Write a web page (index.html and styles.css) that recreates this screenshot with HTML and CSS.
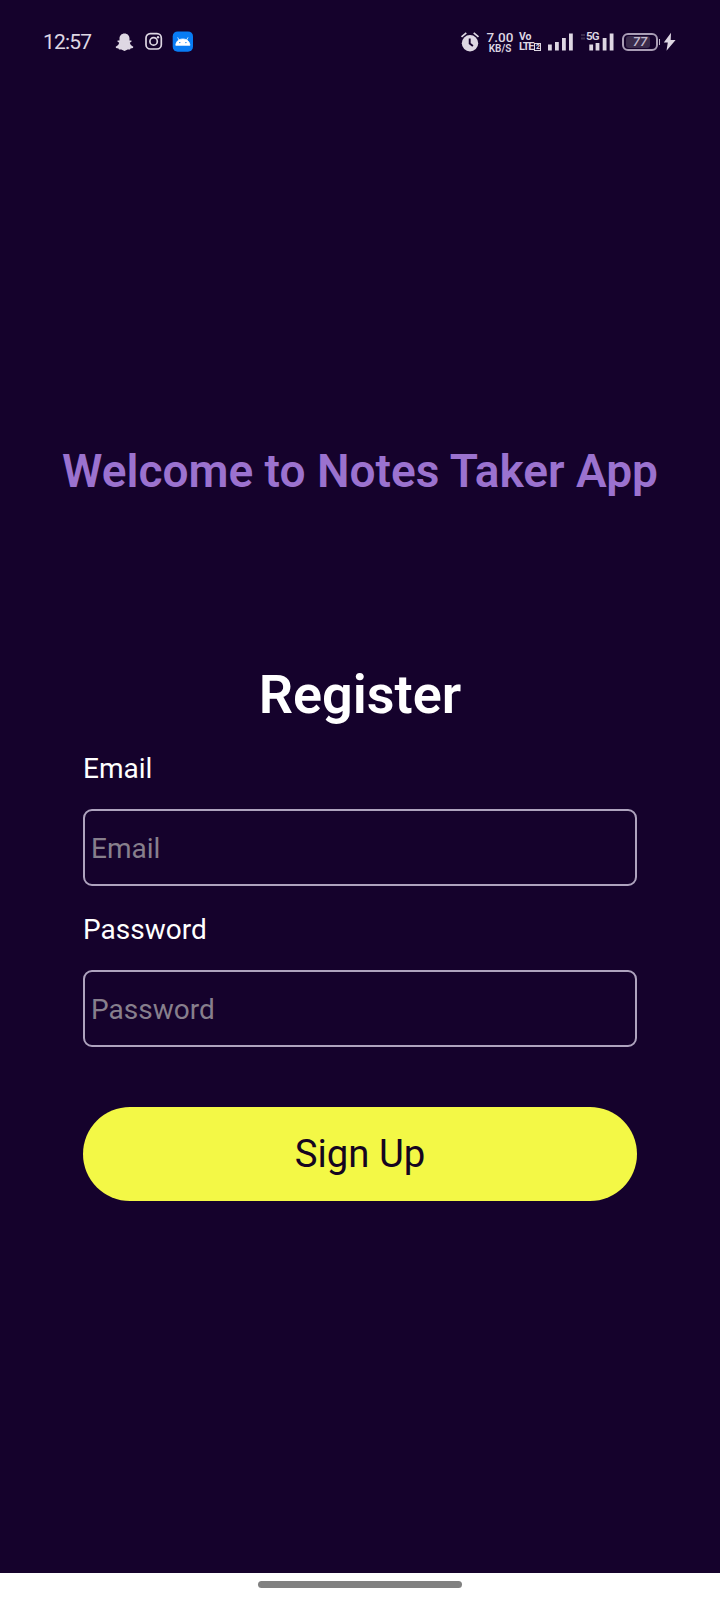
FILE: index.html
```html
<!DOCTYPE html>
<html lang="en">
<head>
<meta charset="utf-8">
<title>Notes Taker App</title>
<link rel="stylesheet" href="styles.css">
</head>
<body>
<div class="screen">
  <header class="status">
    <span class="clock">12:57</span>
    <svg class="notifications" width="80" height="22" viewBox="0 0 80 22">
      <path class="fill" d="M9.500 2.500C6.500 2.500 4.500 4.700 4.500 7.500V9.500L2.600 9.400L2.400 10.600L4.200 11.800C3.600 13.900 2.300 15 0.700 15.800L1 17L3.500 17.600L4 18.600H6.300L9.500 20L12.700 18.600H15L15.500 17.600L18 17L18.300 15.800C16.700 15 15.400 13.900 14.800 11.800L16.600 10.600L16.400 9.400L14.500 9.500V7.500C14.500 4.700 12.500 2.500 9.500 2.500Z"/>
      <rect class="line" x="31" y="2.700" width="15.300" height="15.300" rx="4.300"/>
      <circle class="line" cx="38.600" cy="10.400" r="3.700"/>
      <circle class="fill" cx="43" cy="6.200" r="1.200"/>
      <rect x="57.700" y=".4" width="20.300" height="20.300" rx="5" fill="#087cf5"/>
      <path d="M60.800 14.300C61 10.800 63.400 8 67.800 8S74.700 10.800 74.900 14.300ZM64 9L62.700 6.400M71.700 9L73 6.400" fill="#fff" stroke="#fff" stroke-width=".8"/>
      <circle cx="64.800" cy="11.600" r=".7" fill="#087cf5"/><circle cx="70.900" cy="11.600" r=".7" fill="#087cf5"/>
    </svg>
    <div class="indicators">
      <svg width="20" height="22" viewBox="0 0 20 22">
        <circle class="fill" cx="10" cy="12.300" r="8.200"/>
        <path class="line" d="M1.500 5.800L6.300 1.800M13.700 1.800L18.500 5.800"/>
        <path d="M9.700 7.500V12.600L12.900 15" fill="none" stroke="#15022c" stroke-width="1.900"/>
      </svg>
      <div class="speed"><span>7.00</span><small>KB/S</small></div>
      <div class="volte"><span>Vo</span><span class="lte">LTE<b>2</b></span></div>
      <svg class="signal" width="25" height="22" viewBox="0 0 25 22">
        <path class="fill" d="M0 13.500h3.800v6H0zM7 11h3.800v8.500H7zM14 7h3.800v12.500H14zM21 2.500h3.800v17H21z"/>
      </svg>
      <div class="mobile">
        <svg width="34" height="22" viewBox="0 0 34 22">
          <path d="M0 4h4M0 7.500h4" stroke="#3b2c4c" stroke-width="2"/>
          <path class="fill" d="M8.300 13.500h3.800v6H8.300zM14.600 12h3.800v7.500h-3.800zM21.700 7h3.800v12.500h-3.800zM28.700 2.500h3.800v17h-3.800z"/>
        </svg>
        <span class="network">5G</span>
      </div>
      <div class="battery"><span>77</span></div>
      <svg class="bolt" width="14" height="22" viewBox="0 0 14 22"><path class="fill" d="M8 1.700L.8 11.500H4.800L3.500 19.700L12.600 8.900H7.700Z"/></svg>
    </div>
  </header>
  <main class="content">
    <h1 class="welcome">Welcome to Notes Taker App</h1>
    <form class="form">
      <h2 class="title">Register</h2>
      <label class="label" for="email">Email</label>
      <input class="input" id="email" type="email" placeholder="Email">
      <label class="label" for="password">Password</label>
      <input class="input" id="password" type="password" placeholder="Password">
      <button class="submit" type="button">Sign Up</button>
    </form>
  </main>
  <footer class="navigation"><div class="handle"></div></footer>
</div>
</body>
</html>
```
FILE: styles.css
```css
* { box-sizing: border-box; }
body { margin: 0; font-family: Roboto, "Liberation Sans", sans-serif; }
.screen { width: 720px; height: 1600px; display: flex; flex-direction: column; background: #15022c; color: #fff; overflow: hidden; }
.status { display: flex; align-items: center; height: 84px; padding: 0 43px; color: #ded7e3; }
.clock { width: 72px; font-size: 21px; line-height: 24px; letter-spacing: -.8px; }
.notifications { flex: none; }
.fill { fill: #ded7e3; }
.line { fill: none; stroke: #ded7e3; stroke-width: 1.7; }
.indicators { display: flex; align-items: center; margin-left: auto; height: 22px; }
.speed { display: flex; flex-direction: column; align-items: center; width: 28px; margin-left: 6px; font-size: 13.5px; line-height: 12px; font-weight: 500; }
.speed small { font-size: 10px; line-height: 11px; font-weight: 600; }
.volte { display: flex; flex-direction: column; width: 22px; margin-left: 5px; font-size: 10.5px; line-height: 9px; font-weight: 700; }
.volte span { display: flex; align-items: center; }
.volte .lte { font-size: 11px; line-height: 11px; letter-spacing: -1.1px; }
.volte b { flex: none; width: 7px; height: 8px; margin-left: 1px; border: 1px solid; font-size: 7px; line-height: 6px; letter-spacing: 0; text-align: center; }
.signal { margin-left: 7px; }
.mobile { position: relative; width: 34px; height: 22px; margin-left: 8px; }
.network { position: absolute; left: 5px; top: -1px; background: #15022c; font-size: 11.5px; line-height: 12px; font-weight: 600; letter-spacing: -.7px; }
.battery { position: relative; width: 36px; height: 18px; margin-left: 7px; padding: 1px; border: 2px solid #a99db5; border-radius: 6px; }
.battery span { display: block; width: 24px; height: 12px; margin-left: 1px; padding-left: 4px; background: #3a2b4b; border-radius: 3px; color: #c2b8cb; font-size: 13px; line-height: 12px; font-style: italic; font-weight: 500; text-align: center; }
.battery::after { content: ""; position: absolute; right: -4px; top: 4px; width: 1px; height: 6px; background: #bdb3c7; }
.bolt { margin-left: 5px; }
.content { flex: 1; display: flex; flex-direction: column; padding: 356px 0 0; }
.welcome { margin: 0; font-size: 46px; line-height: 62px; font-weight: 600; text-align: center; color: #9b72cf; white-space: nowrap; }
.form { display: flex; flex-direction: column; margin: 157px 83px 0; }
.title { margin: 0; font-size: 54px; line-height: 72px; font-weight: 600; text-align: center; }
.label { margin-top: 21px; font-size: 28px; line-height: 36px; }
.title + .label { margin-top: 20px; }
.input { height: 77px; margin: 22px 0 5px; padding: 1px 6px 0; border: 2px solid #aea3be; border-radius: 9px; outline: 0; background: transparent; color: #fff; font: 28px Roboto, sans-serif; }
.input::placeholder { color: #877f8c; opacity: 1; }
.submit { height: 94px; margin-top: 55px; padding: 0 0 1px; border: 0; border-radius: 48px; background: #f3f846; color: #150520; font: 38.3px Roboto, sans-serif; }
.navigation { display: flex; justify-content: center; height: 27px; padding-top: 8px; background: #fff; }
.handle { width: 204px; height: 7px; border-radius: 4px; background: #818181; }
```
